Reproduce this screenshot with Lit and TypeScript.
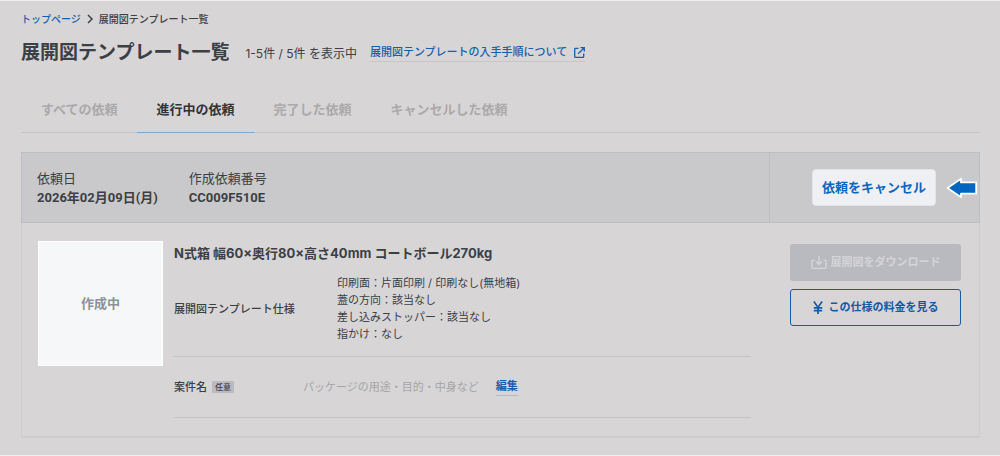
import { LitElement, html, css, svg } from "lit";
import { customElement, state } from "lit/decorators.js";

const TABS = ["すべての依頼", "進行中の依頼", "完了した依頼", "キャンセルした依頼"];

const SPECS = [
  ["印刷面", "片面印刷 / 印刷なし(無地箱)"],
  ["蓋の方向", "該当なし"],
  ["差し込みストッパー", "該当なし"],
  ["指かけ", "なし"],
];

const chevronIcon = html`<svg class="chevron" viewBox="0 0 6 10" aria-hidden="true">
  ${svg`<path d="M1 1l4 4-4 4" fill="none" stroke="currentColor" stroke-width="1.5"/>`}
</svg>`;

const externalIcon = html`<svg class="external" viewBox="0 0 11 11" aria-hidden="true">
  ${svg`<path d="M4.5 1.3H1.6a.9.9 0 0 0-.9.9v7.2c0 .5.4.9.9.9h7.2c.5 0 .9-.4.9-.9V6.5M6.5.7h3.8v3.8M10 1L4.2 6.8" fill="none" stroke="currentColor" stroke-width="1.3"/>`}
</svg>`;

const downloadIcon = html`<svg class="download" viewBox="0 0 16 15" aria-hidden="true">
  ${svg`<path d="M3.5 5.4H1.6a.6.6 0 0 0-.6.6v6.8a.6.6 0 0 0 .6.6h12.8a.6.6 0 0 0 .6-.6V6a.6.6 0 0 0-.6-.6h-1.9M8 .8v8.4M5 6.4l3 3 3-3" fill="none" stroke="currentColor" stroke-width="1.4"/>`}
</svg>`;

const yenIcon = html`<svg class="yen" viewBox="0 0 10 13" aria-hidden="true">
  ${svg`<path d="M.9.6L5 6.4 9.1.6M5 6.2V13M.8 6.8h8.4M.8 9.6h8.4" fill="none" stroke="currentColor" stroke-width="1.7"/>`}
</svg>`;

const arrowIcon = html`<svg class="arrow" viewBox="0 0 32 22" aria-hidden="true">
  ${svg`<path d="M1.5 11L15 1.8v3.6h15.2v11.2H15v3.6z" fill="#0066c0" stroke="#fff" stroke-width="1.8" stroke-linejoin="round"/>`}
</svg>`;

@customElement("app-root")
export class AppRoot extends LitElement {
  @state() private active = 1;

  static styles = css`
    :host {
      display: block;
      box-sizing: border-box;
      min-height: 100vh;
      padding: 12px 20px 17px 21px;
      border: solid #f0f0f1;
      border-width: 1px 0;
      background: #d7d5d6;
      color: #3b4045;
      font-family: Inter, "Noto Sans CJK JP", sans-serif;
      font-size: 11px;
      line-height: 17px;
    }
    * { box-sizing: border-box; }
    h1, h2, p, dl, dd, dt, ul { margin: 0; padding: 0; }
    button { font: inherit; color: inherit; cursor: pointer; }
    a { color: #165fac; text-decoration: none; }
    svg { flex: none; }

    .crumbs { display: flex; align-items: center; gap: 6px; font-size: 10px; line-height: 12px; font-weight: 500; }
    .chevron { width: 6px; height: 10px; }

    .heading { display: flex; align-items: center; gap: 13px; margin-top: 13px; }
    h1 { margin-right: 3px; font-size: 19px; line-height: 30px; font-weight: 700; }
    .count { font-size: 12px; }
    .guide { display: flex; align-items: center; gap: 7px; border-bottom: 1px solid #c6c6c9; font-weight: 500; }
    .external { width: 11px; height: 11px; }

    .tabs { display: flex; margin-top: 19px; border-bottom: 1px solid #c5c4c6; }
    .tab {
      margin-bottom: -1px;
      padding: 12px 19px 13px 20px;
      border: 0;
      border-bottom: 1px solid transparent;
      background: none;
      color: #aba9aa;
      font-size: 13px;
      line-height: 20px;
      font-weight: 700;
    }
    .tab.active { color: #303438; border-bottom-color: #83a6c4; }

    .card { margin-top: 19px; border: 1px solid #cdccce; border-bottom-width: 2px; }
    .card-head {
      display: flex;
      margin: -1px -1px 0;
      border: 1px solid #bdbec2;
      background: #c9c9cb;
      font-size: 13px;
      line-height: 19px;
      font-family: Roboto, "Noto Sans CJK JP", sans-serif;
    }
    .meta { flex: 1; display: flex; gap: 31px; padding: 16px 15px 15px; }
    .meta dd { font-weight: 700; }
    .cancel-cell {
      position: relative;
      width: 210px;
      display: flex;
      align-items: center;
      justify-content: center;
      padding-right: 1px;
      border-left: 1px solid #bdbec2;
    }
    .cancel {
      height: 37px;
      padding: 0 9px;
      border: 1px solid #e2e4e8;
      border-radius: 4px;
      background: #eef0f4;
      color: #0b66c0;
      font-weight: 700;
    }
    .arrow { position: absolute; right: 1px; width: 32px; height: 22px; }

    .card-body { display: flex; gap: 11px; padding: 18px 18px 18px 16px; }
    .thumb {
      flex: none;
      width: 125px;
      height: 125px;
      display: grid;
      place-items: center;
      border: 1px solid #fff;
      background: #f6f7f9;
      color: #8d9299;
      font-size: 13px;
      font-weight: 700;
    }
    .main { flex: 1; }
    h2 { margin-top: 2px; font-size: 13px; line-height: 20px; font-weight: 700; }
    .row { display: flex; align-items: center; border-bottom: 1px solid #c3c2c4; }
    .spec { padding: 12px 0 13px; }
    .label { width: 163px; font-weight: 500; }
    .project { height: 61px; }
    .project .label { width: 129px; display: flex; align-items: center; gap: 5px; }
    .badge { padding: 0 3px; background: #b9bbc1; border-radius: 1px; font-size: 8px; line-height: 12px; font-weight: 500; }
    .empty { color: #a6a5a7; }
    .edit {
      margin-left: 17px;
      padding: 0;
      border: 0;
      border-bottom: 1px solid #b5bbc6;
      background: none;
      color: #165fac;
      font-weight: 700;
    }
    .actions { flex: none; width: 171px; margin: 3px 0 0 28px; display: flex; flex-direction: column; gap: 8px; }
    .action {
      height: 37px;
      display: flex;
      align-items: center;
      justify-content: center;
      gap: 6px;
      border: 1px solid #165ba4;
      border-radius: 3px;
      background: none;
      color: #125aa6;
      font-weight: 700;
    }
    .action:disabled { gap: 4px; border: 0; background: #b9bac0; color: #d5d4d7; cursor: default; }
    .download { width: 16px; height: 15px; }
    .yen { width: 10px; height: 13px; }
  `;

  render() {
    return html`
      <nav class="crumbs" aria-label="パンくず">
        <a href="#top">トップページ</a>${chevronIcon}<span>展開図テンプレート一覧</span>
      </nav>
      <header class="heading">
        <h1>展開図テンプレート一覧</h1>
        <p class="count">1-5件 / 5件 を表示中</p>
        <a class="guide" href="#guide">展開図テンプレートの入手手順について${externalIcon}</a>
      </header>
      <div class="tabs" role="tablist">
        ${TABS.map(
          (name, i) => html`<button
            class="tab ${i === this.active ? "active" : ""}"
            role="tab"
            aria-selected=${i === this.active}
            @click=${() => (this.active = i)}
          >${name}</button>`
        )}
      </div>
      <section class="card">
        <div class="card-head">
          <dl class="meta">
            <div><dt>依頼日</dt><dd>2026年02月09日(月)</dd></div>
            <div><dt>作成依頼番号</dt><dd>CC009F510E</dd></div>
          </dl>
          <div class="cancel-cell">
            <button class="cancel">依頼をキャンセル</button>
            ${arrowIcon}
          </div>
        </div>
        <div class="card-body">
          <div class="thumb">作成中</div>
          <div class="main">
            <h2>N式箱 幅60×奥行80×高さ40mm コートボール270kg</h2>
            <dl>
              <div class="row spec">
                <dt class="label">展開図テンプレート仕様</dt>
                <dd>${SPECS.map(([k, v]) => html`<div>${k}：${v}</div>`)}</dd>
              </div>
              <div class="row project">
                <dt class="label">案件名<span class="badge">任意</span></dt>
                <dd class="empty">パッケージの用途・目的・中身など</dd>
                <dd><button class="edit">編集</button></dd>
              </div>
            </dl>
          </div>
          <div class="actions">
            <button class="action" disabled>${downloadIcon}展開図をダウンロード</button>
            <button class="action">${yenIcon}この仕様の料金を見る</button>
          </div>
        </div>
      </section>
    `;
  }
}
